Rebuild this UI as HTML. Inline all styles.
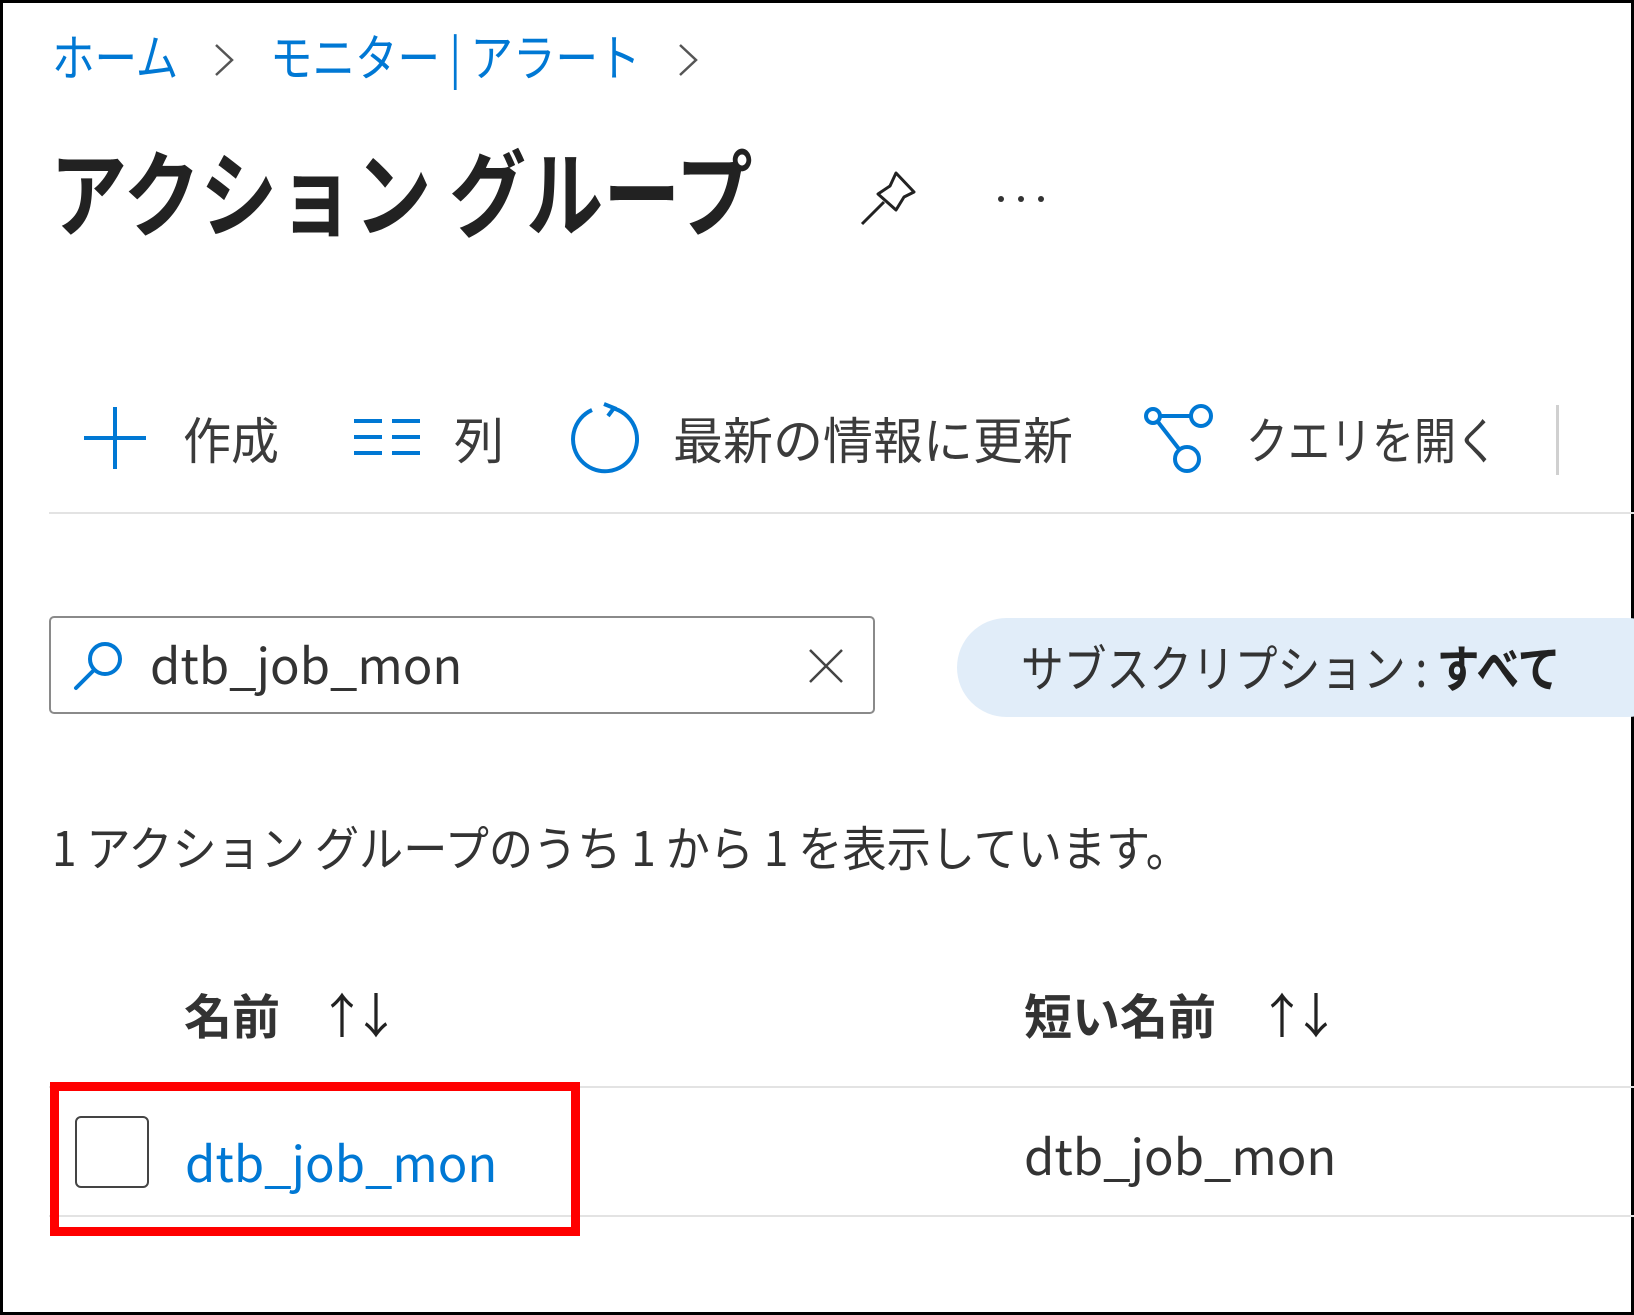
<!DOCTYPE html>
<html><head><meta charset="utf-8"><style>
html,body{margin:0;padding:0;background:#fff}
body{width:1634px;height:1315px;position:relative;overflow:hidden;font-family:"Liberation Sans","Noto Sans CJK JP",sans-serif}
.frame{position:absolute;left:0;top:0;width:1628px;height:1309px;border:3px solid #000}
.t{position:absolute;white-space:nowrap;line-height:1;font-family:"Noto Sans CJK JP",sans-serif;transform-origin:0 50%}
.blue{color:#0078d4}
.g{color:#3b3b3b}
.line{position:absolute;background:#e3e3e3}
</style></head><body>
<div class="frame"></div>

<!-- breadcrumb -->
<div class="t blue" style="left:52px;top:30px;font-size:50px;transform:scaleX(.85)">ホーム</div>
<svg style="position:absolute;left:212px;top:42px" width="24" height="36"><path d="M4 3 L20 18 L4 33" fill="none" stroke="#555" stroke-width="2.5"/></svg>
<div class="t blue" style="left:270px;top:30px;font-size:50px;transform:scaleX(.85)">モニター | アラート</div>
<svg style="position:absolute;left:676px;top:42px" width="24" height="36"><path d="M4 3 L20 18 L4 33" fill="none" stroke="#555" stroke-width="2.5"/></svg>

<!-- title -->
<div class="t" style="left:50px;top:142px;font-size:94px;font-weight:700;color:#222;transform:scaleX(.82)">アクション グループ</div>
<svg style="position:absolute;left:858px;top:170px" width="62" height="58" viewBox="0 0 62 58"><path d="M38 3 L56 22 L46 27 L38 40 L20 24 L32 16 Z M26 32 L4 54" fill="none" stroke="#222" stroke-width="3" stroke-linejoin="round"/></svg>
<div style="position:absolute;left:998px;top:196px;width:6px;height:6px;border-radius:3px;background:#333"></div>
<div style="position:absolute;left:1018px;top:196px;width:6px;height:6px;border-radius:3px;background:#333"></div>
<div style="position:absolute;left:1038px;top:196px;width:6px;height:6px;border-radius:3px;background:#333"></div>

<!-- toolbar -->
<svg style="position:absolute;left:82px;top:405px" width="66" height="66"><path d="M33 2 V64 M2 33 H64" stroke="#0078d4" stroke-width="4"/></svg>
<div class="t g" style="left:183px;top:413px;font-size:50px;transform:scaleX(.96)">作成</div>
<svg style="position:absolute;left:354px;top:418px" width="66" height="40"><path d="M0 3H28M0 19H28M0 35H28M38 3H66M38 19H66M38 35H66" stroke="#0078d4" stroke-width="4"/></svg>
<div class="t g" style="left:454px;top:413px;font-size:50px">列</div>
<svg style="position:absolute;left:568px;top:402px" width="72" height="72" viewBox="0 0 72 72"><path d="M24 8 A32 32 0 1 0 44 6" fill="none" stroke="#0078d4" stroke-width="4"/><path d="M36 2 L46 6 L40 14" fill="none" stroke="#0078d4" stroke-width="4"/></svg>
<div class="t g" style="left:673px;top:413px;font-size:50px;transform:scaleX(1.0)">最新の情報に更新</div>
<svg style="position:absolute;left:1144px;top:404px" width="70" height="70" viewBox="0 0 70 70"><circle cx="9" cy="12" r="7" fill="none" stroke="#0078d4" stroke-width="4"/><circle cx="57" cy="12" r="10" fill="none" stroke="#0078d4" stroke-width="4"/><circle cx="43" cy="55" r="12" fill="none" stroke="#0078d4" stroke-width="4"/><path d="M16 12 H47 M14 18 L35 45" stroke="#0078d4" stroke-width="4"/></svg>
<div class="t g" style="left:1246px;top:413px;font-size:50px;transform:scaleX(.84)">クエリを開く</div>
<div style="position:absolute;left:1556px;top:405px;width:3px;height:70px;background:#d0d0d0"></div>
<div class="line" style="left:49px;top:512px;width:1585px;height:2px"></div>

<!-- search -->
<div style="position:absolute;left:49px;top:616px;width:822px;height:94px;border:2px solid #8a8a8a;border-radius:5px"></div>
<svg style="position:absolute;left:72px;top:638px" width="56" height="56" viewBox="0 0 56 56"><circle cx="33" cy="21" r="15" fill="none" stroke="#0078d4" stroke-width="4"/><path d="M22 32 L4 50" stroke="#0078d4" stroke-width="4" stroke-linecap="round"/></svg>
<div class="t" style="left:150px;top:639px;font-size:49px;color:#333">dtb_job_mon</div>
<svg style="position:absolute;left:808px;top:648px" width="36" height="36"><path d="M2 2 L34 34 M34 2 L2 34" stroke="#444" stroke-width="2.5"/></svg>

<!-- pill -->
<div style="position:absolute;left:957px;top:618px;width:720px;height:99px;border-radius:50px;background:#e1edf9"></div>
<div class="t" style="left:1021px;top:641px;font-size:50px;color:#333;transform:scaleX(.855)">サブスクリプション : <b style="color:#222">すべて</b></div>

<!-- count -->
<div class="t" style="left:52px;top:821px;font-size:48px;color:#333;transform:scaleX(.92)">1 アクション グループのうち 1 から 1 を表示しています。</div>

<!-- headers -->
<div class="t" style="left:184px;top:989px;font-size:48px;font-weight:700;color:#333;transform:scaleX(1)">名前</div>
<div class="t" style="left:318px;top:988px;font-size:48px;color:#222;letter-spacing:-14px">↑↓</div>
<div class="t" style="left:1024px;top:989px;font-size:48px;font-weight:700;color:#333;transform:scaleX(1)">短い名前</div>
<div class="t" style="left:1258px;top:988px;font-size:48px;color:#222;letter-spacing:-14px">↑↓</div>

<div class="line" style="left:49px;top:1086px;width:1585px;height:2px"></div>
<div class="line" style="left:49px;top:1215px;width:1585px;height:2px"></div>

<div style="position:absolute;left:75px;top:1116px;width:70px;height:68px;border:2px solid #444;border-radius:6px"></div>
<div class="t blue" style="left:185px;top:1137px;font-size:49px">dtb_job_mon</div>
<div class="t" style="left:1024px;top:1130px;font-size:49px;color:#333">dtb_job_mon</div>

<div style="position:absolute;left:50px;top:1082px;width:512px;height:136px;border:9px solid #f00"></div>
</body></html>
